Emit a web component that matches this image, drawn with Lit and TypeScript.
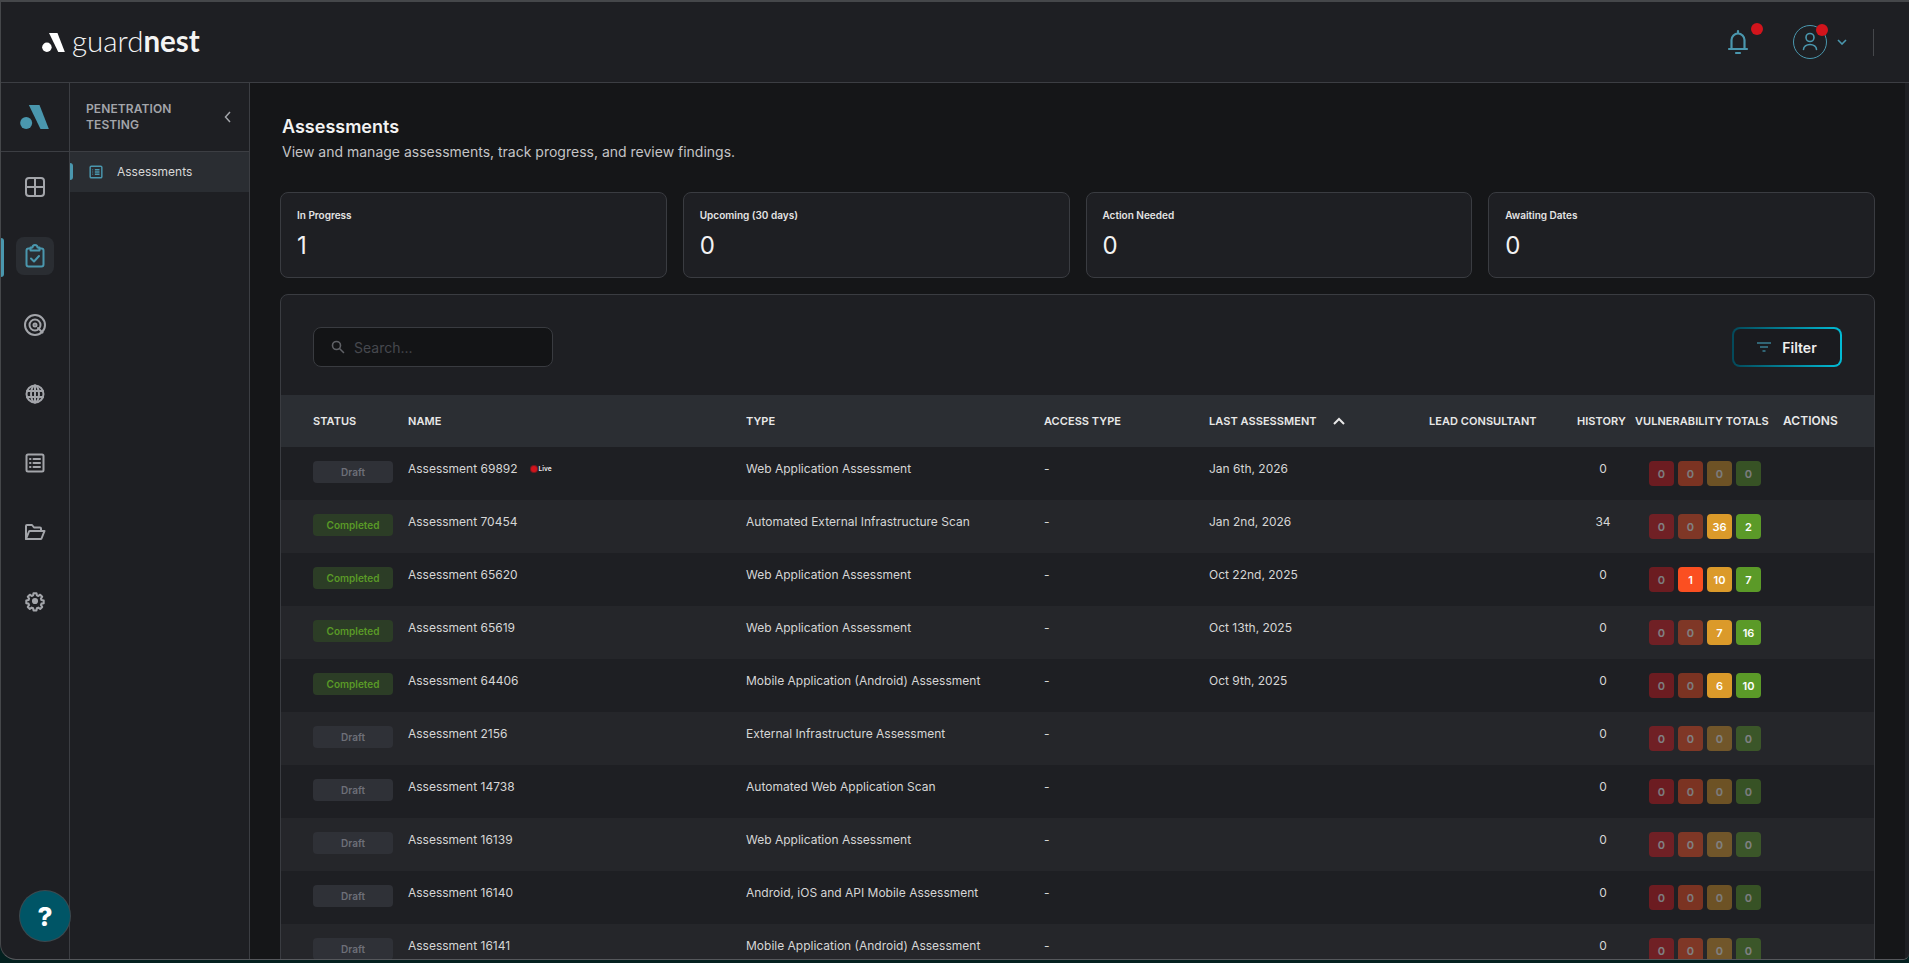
import { LitElement, html, css, svg } from 'lit';
import { customElement } from 'lit/decorators.js';
import { classMap } from 'lit/directives/class-map.js';

const railIcons = [
  svg`<rect x="3" y="3" width="18" height="18" rx="3"/><path d="M12 3v18M3 12h18"/>`,
  svg`<path d="M7.500 4.500h-2a2 2 0 0 0-2 2v14a2 2 0 0 0 2 2h13a2 2 0 0 0 2-2v-14a2 2 0 0 0-2-2h-2"/><path d="M7.500 6.500v-3h2a2.500 2.500 0 0 1 5 0h2v3z"/><path d="M8 14.500l3 3 5-5.500"/>`,
  svg`<circle cx="12" cy="12" r="10"/><circle cx="12" cy="12" r="5.500"/><path d="M15 15l4.500 4.500"/><circle cx="12" cy="12" r="1.500"/>`,
  svg`<circle cx="12" cy="12" r="8.500"/><ellipse cx="12" cy="12" rx="4" ry="8.500"/><path d="M4 9h16M4 15h16M12 3.500v17"/>`,
  svg`<rect x="3.500" y="3.500" width="17" height="17" rx="1.500"/><path d="M10.500 8h6.500M10.500 12h6.500M10.500 16h6.500M7 8h.5M7 12h.5M7 16h.5"/>`,
  svg`<path d="M3 19V6a1 1 0 0 1 1-1h5l2 2.500h6a1 1 0 0 1 1 1V11"/><path d="M3 19l3-7.500a1 1 0 0 1 1-.5h14.500l-3 7.500a1 1 0 0 1-1 .5z"/>`,
  svg`<g transform="translate(12 12) scale(.82) translate(-12 -12)" stroke-width="2.500"><circle cx="12" cy="12" r="2.500" fill="currentColor"/><path d="M10.200 2.500h3.600l.5 2.700 1.700.7 2.300-1.600 2.500 2.500-1.600 2.300.7 1.700 2.700.5v3.400l-2.700.5-.7 1.700 1.600 2.300-2.500 2.500-2.300-1.600-1.700.7-.5 2.700h-3.600l-.5-2.700-1.700-.7-2.300 1.600-2.500-2.500 1.600-2.300-.7-1.700-2.700-.5v-3.400l2.700-.5.7-1.700-1.600-2.300 2.500-2.500 2.300 1.600 1.700-.7z"/></g>`,
];

const stats = [
  { label: 'In Progress', value: 1 },
  { label: 'Upcoming (30 days)', value: 0 },
  { label: 'Action Needed', value: 0 },
  { label: 'Awaiting Dates', value: 0 },
];

const columns = ['STATUS', 'NAME', 'TYPE', 'ACCESS TYPE', 'LAST ASSESSMENT', 'LEAD CONSULTANT', 'HISTORY', 'VULNERABILITY TOTALS', 'ACTIONS'];

const rows = [
  { status: 'Draft', name: 'Assessment 69892', live: true, type: 'Web Application Assessment', date: 'Jan 6th, 2026', history: 0, totals: [0, 0, 0, 0] },
  { status: 'Completed', name: 'Assessment 70454', type: 'Automated External Infrastructure Scan', date: 'Jan 2nd, 2026', history: 34, totals: [0, 0, 36, 2] },
  { status: 'Completed', name: 'Assessment 65620', type: 'Web Application Assessment', date: 'Oct 22nd, 2025', history: 0, totals: [0, 1, 10, 7] },
  { status: 'Completed', name: 'Assessment 65619', type: 'Web Application Assessment', date: 'Oct 13th, 2025', history: 0, totals: [0, 0, 7, 16] },
  { status: 'Completed', name: 'Assessment 64406', type: 'Mobile Application (Android) Assessment', date: 'Oct 9th, 2025', history: 0, totals: [0, 0, 6, 10] },
  { status: 'Draft', name: 'Assessment 2156', type: 'External Infrastructure Assessment', date: '', history: 0, totals: [0, 0, 0, 0] },
  { status: 'Draft', name: 'Assessment 14738', type: 'Automated Web Application Scan', date: '', history: 0, totals: [0, 0, 0, 0] },
  { status: 'Draft', name: 'Assessment 16139', type: 'Web Application Assessment', date: '', history: 0, totals: [0, 0, 0, 0] },
  { status: 'Draft', name: 'Assessment 16140', type: 'Android, iOS and API Mobile Assessment', date: '', history: 0, totals: [0, 0, 0, 0] },
  { status: 'Draft', name: 'Assessment 16141', type: 'Mobile Application (Android) Assessment', date: '', history: 0, totals: [0, 0, 0, 0] },
];

const severities = ['critical', 'high', 'medium', 'low'];

@customElement('app-root')
export class AppRoot extends LitElement {
  static styles = css`
    :host {
      display: block;
      height: 963px;
      overflow: hidden;
      background: #03201f;
      font-family: Inter, 'Noto Sans', sans-serif;
      color: #dcdcdc;
    }
    .window {
      position: relative;
      box-sizing: border-box;
      height: 960px;
      display: flex;
      flex-direction: column;
      background: #1e1f23;
      border-top: 2px solid #45474a;
      border-left: 1px solid #45474a;
      border-bottom: 1px solid #55575b;
      border-radius: 0 0 6px 16px;
      overflow: hidden;
    }
    header {
      flex: none;
      height: 80px;
      display: flex;
      align-items: center;
      border-bottom: 1px solid #3c3e43;
    }
    .logo {
      display: flex;
      align-items: center;
      margin-left: 41px;
    }
    .logo svg {
      width: 23px;
      height: 19px;
      margin-right: 7px;
    }
    .wordmark {
      font-family: Lato, sans-serif;
      font-size: 29.500px;
      font-weight: 300;
      color: #f4f4f4;
      line-height: 36px;
      margin-top: -3px;
    }
    .wordmark b {
      font-weight: 700;
    }
    .head-right {
      margin-left: auto;
      display: flex;
      align-items: center;
      padding-right: 35px;
    }
    .bell {
      position: relative;
      width: 24px;
      height: 26px;
      margin-right: 43px;
    }
    .bell svg {
      width: 24px;
      height: 26px;
      fill: none;
      stroke: #4a97ae;
      stroke-width: 2.200;
      stroke-linecap: round;
      stroke-linejoin: round;
    }
    .dot {
      position: absolute;
      width: 12px;
      height: 12px;
      border-radius: 50%;
      background: #d2141c;
    }
    .bell .dot {
      left: 25px;
      top: -6px;
    }
    .avatar {
      position: relative;
      width: 32px;
      height: 32px;
      border: 1px solid #4a97ae;
      border-radius: 50%;
    }
    .avatar svg {
      width: 32px;
      height: 32px;
      fill: none;
      stroke: #4a97ae;
      stroke-width: 1.600;
      stroke-linecap: round;
    }
    .avatar .dot {
      left: 22px;
      top: -2px;
    }
    .caret {
      width: 10px;
      height: 6px;
      margin-left: 10px;
      margin-right: 26px;
      fill: none;
      stroke: #4a97ae;
      stroke-width: 1.600;
    }
    .divider {
      width: 1px;
      height: 27px;
      background: #45474b;
    }
    .body {
      flex: 1;
      min-height: 0;
      display: flex;
      padding-right: 4px;
    }
    .rail {
      flex: none;
      width: 68px;
      border-right: 1px solid #3c3e43;
      display: flex;
      flex-direction: column;
      align-items: center;
    }
    .rail-logo {
      align-self: stretch;
      height: 68px;
      border-bottom: 1px solid #3c3e43;
      display: flex;
      align-items: center;
      justify-content: center;
      margin-bottom: 16px;
    }
    .rail-logo svg {
      width: 29px;
      height: 24px;
      margin-right: 2px;
    }
    .rail-item {
      position: relative;
      width: 38px;
      height: 38px;
      margin-bottom: 31px;
      border-radius: 8px;
      display: flex;
      align-items: center;
      justify-content: center;
      color: #a3a5aa;
    }
    .rail-item svg {
      width: 24px;
      height: 24px;
      fill: none;
      stroke: currentColor;
      stroke-width: 2;
      stroke-linecap: round;
      stroke-linejoin: round;
    }
    .rail-item.active {
      background: #2a2d32;
      color: #4a97ae;
    }
    .rail-item.active::before {
      content: '';
      position: absolute;
      left: -15px;
      top: 1px;
      width: 3px;
      height: 39px;
      border-radius: 0 3px 3px 0;
      background: #4a97ae;
    }
    .panel {
      flex: none;
      width: 179px;
      border-right: 1px solid #3c3e43;
    }
    .panel-head {
      height: 68px;
      border-bottom: 1px solid #3c3e43;
      padding: 0 17px 0 16px;
      display: flex;
      align-items: center;
      justify-content: space-between;
      font-size: 12px;
      font-weight: 600;
      line-height: 16px;
      color: #a3a5aa;
      letter-spacing: 0.1px;
    }
    .panel-head svg {
      width: 8px;
      height: 12px;
      fill: none;
      stroke: #a3a5aa;
      stroke-width: 1.500;
    }
    .panel-item {
      position: relative;
      box-sizing: border-box;
      height: 40px;
      padding: 0 0 1px 19px;
      background: #2a2d32;
      display: flex;
      align-items: center;
      font-size: 12px;
      color: #d8d8d8;
    }
    .panel-item::before {
      content: '';
      position: absolute;
      left: 0;
      top: 11px;
      width: 3px;
      height: 17px;
      border-radius: 0 3px 3px 0;
      background: #4a97ae;
    }
    .panel-item svg {
      width: 14px;
      height: 14px;
      margin-right: 14px;
      fill: none;
      stroke: #4a97ae;
      stroke-width: 2.500;
    }
    main {
      flex: 1;
      min-width: 0;
      background: #151618;
      padding: 31px 30px 0;
      overflow: hidden;
    }
    h1 {
      margin: 0;
      font-size: 18px;
      font-weight: 600;
      line-height: 26px;
      color: #f2f2f2;
      padding-left: 2px;
    }
    .subtitle {
      margin: 2px 0 0 2px;
      font-size: 14px;
      line-height: 20px;
      color: #c4c4c6;
    }
    .stats {
      margin-top: 30px;
      display: grid;
      grid-template-columns: repeat(4, 1fr);
      gap: 16px;
    }
    .stat {
      box-sizing: border-box;
      height: 86px;
      background: #1e1f23;
      border: 1px solid #3a3c41;
      border-radius: 8px;
      padding: 14px 16px;
    }
    .stat-label {
      font-size: 10px;
      font-weight: 600;
      line-height: 16px;
      color: #e4e4e4;
    }
    .stat-value {
      margin-top: 7px;
      font-size: 24px;
      line-height: 32px;
      color: #f2f2f2;
    }
    .table-card {
      margin-top: 16px;
      background: #1e1f23;
      border: 1px solid #3a3c41;
      border-radius: 8px 8px 0 0;
      height: 800px;
    }
    .toolbar {
      display: flex;
      justify-content: space-between;
      padding: 32px 32px 28px;
    }
    .search {
      box-sizing: border-box;
      width: 240px;
      height: 40px;
      display: flex;
      align-items: center;
      padding-left: 17px;
      background: #131416;
      border: 1px solid #393b40;
      border-radius: 8px;
    }
    .search svg {
      width: 14px;
      height: 14px;
      flex: none;
      fill: none;
      stroke: #5f6166;
      stroke-width: 1.600;
      stroke-linecap: round;
    }
    .search input {
      flex: 1;
      min-width: 0;
      margin-left: 9px;
      border: 0;
      outline: 0;
      padding: 0;
      background: none;
      font: 14px Inter, sans-serif;
      color: #dcdcdc;
    }
    .search input::placeholder {
      color: #46484e;
    }
    .filter {
      box-sizing: border-box;
      width: 110px;
      height: 40px;
      display: flex;
      align-items: center;
      justify-content: center;
      gap: 11px;
      border: 2px solid transparent;
      border-radius: 8px;
      background: linear-gradient(#1a1b1f, #1a1b1f) padding-box, linear-gradient(90deg, #04495a, #02bcd6) border-box;
      color: #eeeeee;
      font: 600 14px Inter, sans-serif;
    }
    .filter svg {
      width: 14px;
      height: 10px;
      fill: none;
      stroke: #3a7f92;
      stroke-width: 1.500;
    }
    .tr {
      display: grid;
      grid-template-columns: 95px 338px 298px 165px 220px 148px 58px 148px 1fr;
      padding-left: 32px;
    }
    .thead {
      height: 52px;
      align-items: center;
      background: #2b2e33;
      font-size: 11px;
      font-weight: 600;
      letter-spacing: 0.05px;
      color: #e8e8e8;
    }
    .thead .sort {
      display: flex;
      align-items: center;
    }
    .thead .sort svg {
      width: 12px;
      height: 8px;
      margin-left: 16px;
      fill: none;
      stroke: #e8e8e8;
      stroke-width: 2;
    }
    .thead .actions {
      font-size: 12px;
      margin-top: -2px;
    }
    .row {
      height: 53px;
      box-sizing: border-box;
      padding-top: 14px;
      font-size: 12px;
      line-height: 16px;
      color: #d6d6d6;
      background: #1e1f23;
    }
    .row:nth-child(even) {
      background: #25262a;
    }
    .chip {
      width: 80px;
      height: 22px;
      border-radius: 4px;
      display: flex;
      align-items: center;
      justify-content: center;
      font-size: 10px;
      font-weight: 600;
    }
    .chip.draft {
      background: #2f3137;
      color: #6d6f78;
    }
    .chip.done {
      background: #2c3d26;
      color: #5a9a27;
    }
    .name {
      display: flex;
      align-items: flex-start;
    }
    .live {
      display: flex;
      align-items: center;
      margin: 4px 0 0 13px;
      font-size: 6.500px;
      font-weight: 600;
      line-height: 8px;
      color: #eeeeee;
    }
    .live::before {
      content: '';
      width: 6px;
      height: 6px;
      margin-right: 2px;
      border-radius: 50%;
      background: #d2141c;
      box-shadow: 0 0 0 1px #7a1a20;
    }
    .history {
      width: 52px;
      text-align: center;
    }
    .totals {
      display: flex;
      gap: 4px;
      padding-left: 14px;
    }
    .sev {
      width: 25px;
      height: 25px;
      border-radius: 4px;
      display: flex;
      align-items: center;
      justify-content: center;
      font-size: 11px;
      font-weight: 600;
      color: #ffffff;
    }
    .sev.zero {
      opacity: 0.42;
    }
    .critical { background: #d8181f; }
    .high { background: #fb4f21; }
    .medium { background: #db9a2a; }
    .low { background: #5b9a28; }
    .help {
      position: absolute;
      left: 19px;
      top: 889px;
      width: 50px;
      height: 50px;
      border-radius: 50%;
      background: #005566;
      box-shadow: 0 0 0 1px #3c4a50;
      display: flex;
      align-items: center;
      justify-content: center;
      font-size: 26px;
      font-weight: 800;
      color: #ffffff;
    }
  `;

  private mark(color: string) {
    return html`<svg viewBox="0 0 86 72" fill=${color}>
      <circle cx="18" cy="54" r="18"/>
      <path d="M26 0H58L86 72H61Z"/>
    </svg>`;
  }

  private renderRow(r: (typeof rows)[number]) {
    const draft = r.status === 'Draft';
    return html`<div class="tr row">
      <div><div class=${classMap({ chip: true, draft, done: !draft })}>${r.status}</div></div>
      <div class="name">${r.name}${r.live ? html`<span class="live">Live</span>` : ''}</div>
      <div>${r.type}</div>
      <div>-</div>
      <div>${r.date}</div>
      <div></div>
      <div class="history">${r.history}</div>
      <div class="totals">
        ${r.totals.map((n, i) => html`<div class="sev ${severities[i]} ${n === 0 ? 'zero' : ''}">${n}</div>`)}
      </div>
      <div></div>
    </div>`;
  }

  render() {
    return html`<div class="window">
      <header>
        <div class="logo">
          ${this.mark('#ffffff')}
          <span class="wordmark">guard<b>nest</b></span>
        </div>
        <div class="head-right">
          <div class="bell">
            <svg viewBox="0 0 24 26">
              <path d="M3 20h18M5.500 20V11a6.500 6.500 0 0 1 13 0v9M12 2v2M10 24h4"/>
            </svg>
            <span class="dot"></span>
          </div>
          <div class="avatar">
            <svg viewBox="0 0 32 32">
              <circle cx="16" cy="11.500" r="4"/>
              <path d="M9.500 23.500a6.500 5 0 0 1 13 0"/>
            </svg>
            <span class="dot"></span>
          </div>
          <svg class="caret" viewBox="0 0 10 6"><path d="M1 1l4 4 4-4"/></svg>
          <div class="divider"></div>
        </div>
      </header>
      <div class="body">
        <nav class="rail">
          <div class="rail-logo">${this.mark('#4a97ae')}</div>
          ${railIcons.map((icon, i) => html`<div class=${classMap({ 'rail-item': true, active: i === 1 })}>
            <svg viewBox="0 0 24 24">${icon}</svg>
          </div>`)}
        </nav>
        <aside class="panel">
          <div class="panel-head">
            <span>PENETRATION<br />TESTING</span>
            <svg viewBox="0 0 8 12"><path d="M6 1L1.500 6 6 11"/></svg>
          </div>
          <div class="panel-item">
            <svg viewBox="0 0 24 24">
              <rect x="2" y="2" width="20" height="20" rx="2"/>
              <path d="M10 8h8M10 12h8M10 16h8M6 8h1M6 12h1M6 16h1"/>
            </svg>
            Assessments
          </div>
        </aside>
        <main>
          <h1>Assessments</h1>
          <p class="subtitle">View and manage assessments, track progress, and review findings.</p>
          <section class="stats">
            ${stats.map((s) => html`<div class="stat">
              <div class="stat-label">${s.label}</div>
              <div class="stat-value">${s.value}</div>
            </div>`)}
          </section>
          <section class="table-card">
            <div class="toolbar">
              <label class="search">
                <svg viewBox="0 0 14 14"><circle cx="5.500" cy="5.500" r="4"/><path d="M8.500 8.500l4 4"/></svg>
                <input placeholder="Search..." />
              </label>
              <button class="filter">
                <svg viewBox="0 0 14 10"><path d="M0 1h14M3 5h8M5.500 9h3"/></svg>
                Filter
              </button>
            </div>
            <div class="tr thead">
              ${columns.map((c) =>
                c === 'LAST ASSESSMENT'
                  ? html`<div class="sort">${c}<svg viewBox="0 0 12 8"><path d="M1 7l5-5 5 5"/></svg></div>`
                  : html`<div class=${c === 'ACTIONS' ? 'actions' : ''}>${c}</div>`
              )}
            </div>
            <div class="tbody">${rows.map((r) => this.renderRow(r))}</div>
          </section>
        </main>
      </div>
      <div class="help">?</div>
    </div>`;
  }
}
